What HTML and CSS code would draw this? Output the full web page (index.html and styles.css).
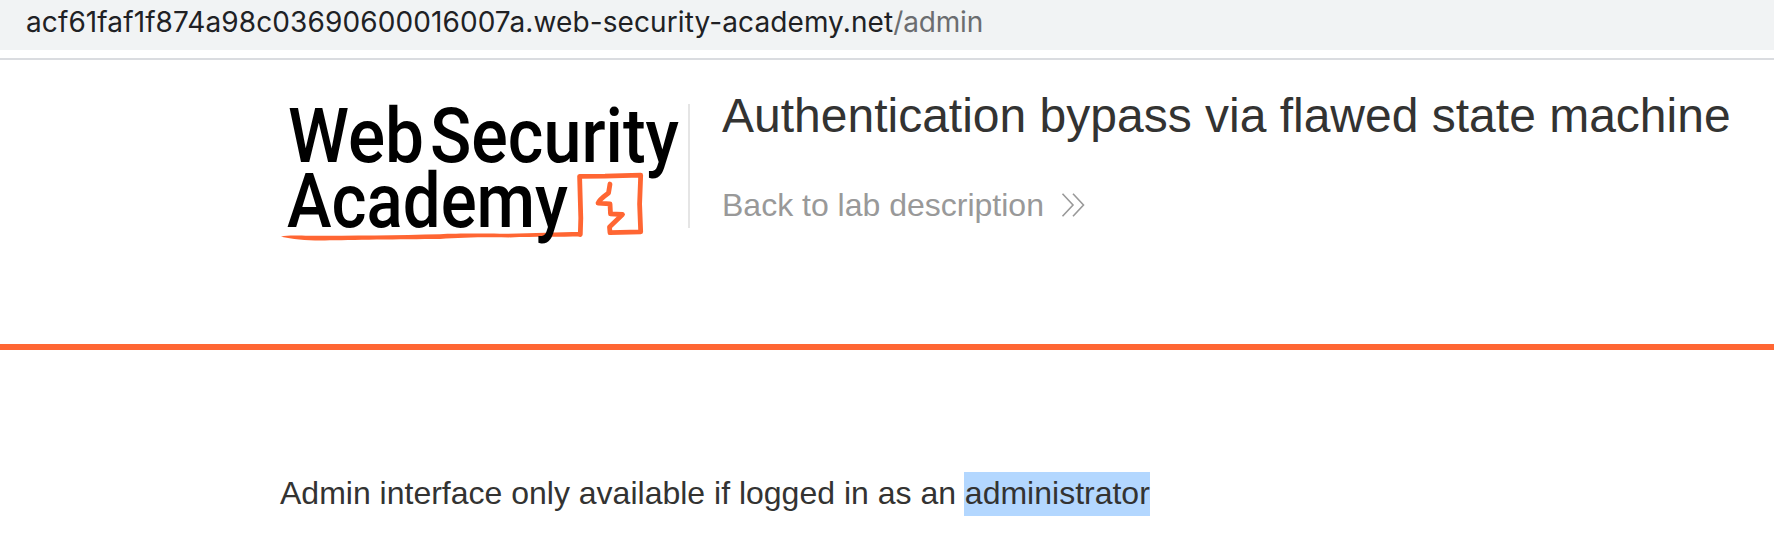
FILE: index.html
```html
<!DOCTYPE html>
<html lang="en">
<head>
<meta charset="utf-8">
<title>Authentication bypass via flawed state machine</title>
<link rel="stylesheet" href="styles.css">
</head>
<body>
<div class="address-bar"><span class="host">acf61faf1f874a98c03690600016007a.web-security-academy.net</span><span class="path">/admin</span></div>
<header class="lab-header">
  <svg class="logo" viewBox="280 100 408 146" width="408" height="146" role="img" aria-label="Web Security Academy">
    <g class="logo-mark">
      <path class="swash" d="M281 236.7 C287 235 296 235.5 310 235.7 C350 235.7 400 235.2 440 234.2 C455 233.5 480 233.5 500 233.8 C530 233.4 555 232 581 232 L581 236.6 C560 237 535 236.6 510 237.4 C480 237 460 237.6 440 238.9 C400 239.2 350 239.7 325 240.4 C308 240.7 293 239.2 281 236.7Z"/>
      <path class="box" d="M580.3 234.5 L580.8 218 L579.6 176.3 L605 176.2 L640.7 175.2 L639.6 204 L640.7 231.8 L610 232.7 L609.5 227 L622.5 214.5 L610.5 213.8 L610 203.8 L598 203.2 Q599 200 608.5 193 L610 184"/>
    </g>
    <g class="logo-text">
      <text x="288" y="161.5" textLength="136" lengthAdjust="spacingAndGlyphs">Web</text>
      <text x="430" y="161.5" textLength="249" lengthAdjust="spacingAndGlyphs">Security</text>
      <text x="287" y="226.5" textLength="281" lengthAdjust="spacingAndGlyphs">Academy</text>
    </g>
  </svg>
  <div class="divider"></div>
  <div class="heading">
    <h1 class="title">Authentication bypass via flawed state machine</h1>
    <a class="back">Back to lab description
      <svg class="chevrons" viewBox="0 0 24 24" width="24" height="24"><path d="M1.5 .8 L12 12 L1.5 23.2 M12 .8 L22.5 12 L12 23.2"/></svg>
    </a>
  </div>
</header>
<main class="content">
  <p class="message">Admin interface only available if logged in as an <span class="selected">administrator</span></p>
</main>
</body>
</html>
```
FILE: styles.css
```css
* { box-sizing: border-box; }
body {
  margin: 0;
  height: 554px;
  overflow: hidden;
  background: #fff;
  color: #333332;
  font-family: "Liberation Sans", Arial, sans-serif;
}
.address-bar {
  height: 50px;
  padding-left: 26px;
  background: #f1f3f4;
  font: 28px/44px Inter, sans-serif;
  white-space: nowrap;
  color: #202124;
}
.host { letter-spacing: .1px; }
.path { color: #6b6d70; letter-spacing: -.15px; }
.lab-header {
  display: flex;
  align-items: flex-start;
  height: 292px;
  margin-top: 8px;
  padding: 40px 0 0 280px;
  border-top: 2px solid #dadce0;
  border-bottom: 6px solid #ff6633;
}
.logo { flex: none; overflow: visible; }
.logo-text {
  font-family: Roboto, sans-serif;
  font-weight: 500;
  font-size: 75.5px;
  fill: #000;
}
.swash { fill: #ff6633; }
.box {
  fill: none;
  stroke: #ff6633;
  stroke-width: 4.8;
  stroke-linejoin: round;
  stroke-linecap: round;
}
.divider {
  flex: none;
  width: 2px;
  height: 124px;
  margin-top: 4px;
  background: #e5e5e5;
}
.heading { padding-left: 32px; white-space: nowrap; }
.title {
  margin: -12px 0 0;
  font-size: 48px;
  font-weight: 400;
  line-height: 56px;
}
.back {
  display: flex;
  align-items: center;
  gap: 17px;
  margin-top: 43px;
  color: #999;
  font-size: 32px;
  line-height: 37px;
}
.chevrons { margin-top: -2px; fill: none; stroke: #999; stroke-width: 1.6; }
.content { padding: 122px 0 0 280px; }
.message { margin: 0; font-size: 32px; line-height: 42px; }
.selected {
  display: inline-block;
  margin-left: -1px;
  padding: 0 0 2px 1px;
  background: #b3d7ff;
}
```
